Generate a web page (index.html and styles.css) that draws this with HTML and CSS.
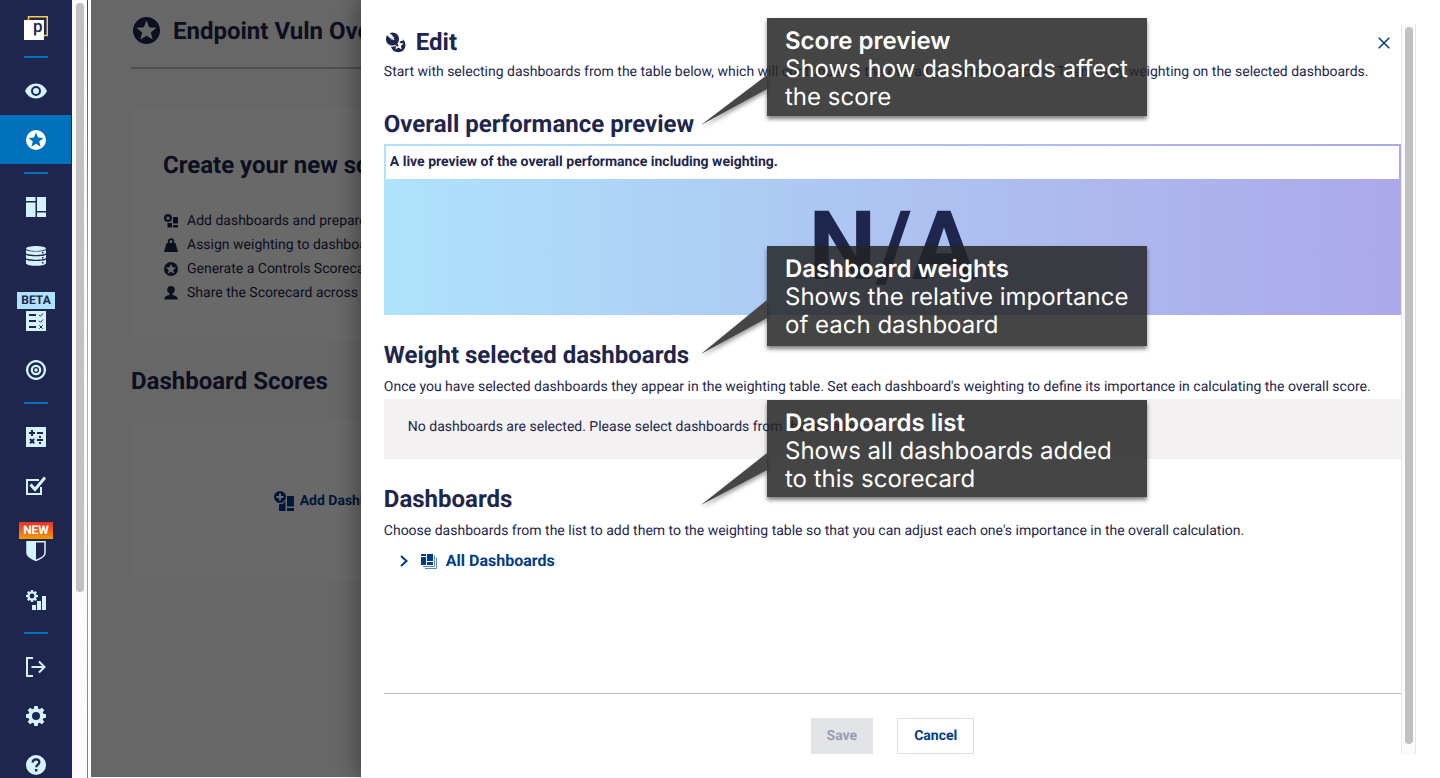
FILE: index.html
```html
<!DOCTYPE html>
<html lang="en">
<head>
<meta charset="utf-8">
<title>Edit scorecard</title>
<link rel="stylesheet" href="styles.css">
</head>
<body>
<svg class="defs" aria-hidden="true">
  <symbol id="star" viewBox="0 0 20 20"><path fill-rule="evenodd" d="M10 0a10 10 0 1 0 0 20a10 10 0 0 0 0-20zM10 2.500L12 7.600 17.400 8 13.200 11.400 14.600 16.700 10 13.800 5.400 16.700 6.800 11.400 2.600 8 8 7.600z"/></symbol>
  <symbol id="gear" viewBox="0 0 20 20"><path fill-rule="evenodd" d="M8.300 0h3.400l.5 2.700 1.400.6L15.900 1.700l2.400 2.400-1.600 2.300.6 1.400 2.700.5v3.400l-2.700.5-.6 1.400 1.600 2.300-2.400 2.400-2.300-1.600-1.400.6-.5 2.700H8.300l-.5-2.700-1.400-.6-2.300 1.600-2.400-2.400 1.600-2.300-.6-1.400L0 11.700V8.300l2.700-.5.6-1.400L1.700 4.100l2.400-2.400 2.300 1.600 1.400-.6zM10 6a4 4 0 1 0 0 8a4 4 0 0 0 0-8z"/></symbol>
</svg>

<nav class="sidebar" aria-label="Main">
  <a class="logo" href="#" aria-label="Home">
    <svg width="24" height="24" viewBox="0 0 24 24"><path d="M4.500 4V.75h18.750V19.500H20" fill="none" stroke="#f2cd47" stroke-width="1.500"/><path d="M0 4h20v20H0z" fill="#fff"/></svg>
    <span class="logo-letter">p</span>
  </a>
  <hr class="nav-rule">
  <a class="nav-item" href="#" aria-label="Overview"><svg width="22" height="16" viewBox="0 0 22 16"><path fill-rule="evenodd" d="M11 .5C6 .5 2 3.500 0 8c2 4.500 6 7.500 11 7.500S20 12.500 22 8C20 3.500 16 .5 11 .5zM11 3a5 5 0 1 1 0 10a5 5 0 0 1 0-10zM11 5a3 3 0 1 0 0 6a3 3 0 0 0 0-6z"/></svg></a>
  <a class="nav-item current" href="#" aria-label="Scorecards"><svg width="20" height="20"><use href="#star"/></svg></a>
  <hr class="nav-rule">
  <a class="nav-item" href="#" aria-label="Dashboards"><svg width="20" height="20" viewBox="0 0 20 20"><path d="M0 0h9.500v4H0zM0 5.500h9.500V20H0zM11 0h9v14h-9zM11 15.500h9V20h-9z"/></svg></a>
  <a class="nav-item" href="#" aria-label="Data"><svg width="20" height="20" viewBox="0 0 20 20"><ellipse cx="10" cy="2.500" rx="10" ry="2.500"/><path d="M0 4c2 2 18 2 20 0v3.300c-2 2.300-18 2.300-20 0zM0 8.700c2 2 18 2 20 0V12c-2 2.300-18 2.300-20 0zM0 13.400c2 2 18 2 20 0v4c-2 3.200-18 3.200-20 0z"/><path class="cut" d="M16 6h1.500v1.500H16zM16 11h1.500v1.500H16zM16 16h1.500v1.500H16z"/></svg></a>
  <a class="nav-item badged" href="#" aria-label="Beta: Checklist"><span class="badge beta">BETA</span><svg width="20" height="20" viewBox="0 0 20 20"><path d="M0 0h20v20H0z"/><path class="cut" d="M3 3h7v2H3zM3 9h7v2H3zM3 15h7v2H3z"/><path class="cut-line" d="M13 3.800l1.500 1.500L17 2.500M13 9.800l1.500 1.500L17 8.500M13.300 14.300l3.400 3.400M16.700 14.300l-3.400 3.400"/></svg></a>
  <a class="nav-item" href="#" aria-label="Targets"><svg width="20" height="20" viewBox="0 0 20 20"><circle cx="10" cy="10" r="8.900" class="line wide"/><circle cx="10" cy="10" r="4.200" class="line wide"/><circle cx="10" cy="10" r="1.800"/></svg></a>
  <hr class="nav-rule">
  <a class="nav-item" href="#" aria-label="Metrics"><svg width="20" height="20" viewBox="0 0 20 20"><path d="M0 0h20v20H0z"/><path class="cut" d="M5 3h2v2h2v2H7v2H5V7H3V5h2zM11 5h6v2h-6zM11 12h6v2h-6zM13 9h2v2h-2zM13 15h2v2h-2z"/><path d="M4 12l4.200 4.200M8.200 12L4 16.200" fill="none" stroke="#1e264d" stroke-width="2"/></svg></a>
  <a class="nav-item" href="#" aria-label="Tasks"><svg width="22" height="20" viewBox="0 0 22 20"><path class="line" d="M14 4H2v14h14v-7"/><path d="M5.500 8.500l4.500 5L20 1.500" fill="none" stroke="#d5f3ff" stroke-width="3"/></svg></a>
  <a class="nav-item badged" href="#" aria-label="New: Security"><span class="badge new">NEW</span><svg width="20" height="20" viewBox="0 0 20 20"><path class="line thin" d="M1 .8h18V12c0 3-4 5.500-9 7.500C5 17.500 1 15 1 12z"/><path d="M1 1h9v18.500C5 17.500 1 15 1 12z"/></svg></a>
  <a class="nav-item" href="#" aria-label="Reports"><svg width="20" height="20" viewBox="0 0 20 20"><use href="#gear" width="12" height="12"/><path d="M6 15h4v5H6zM11 11h4v9h-4zM16 6h4v14h-4z"/></svg></a>
  <hr class="nav-rule">
  <a class="nav-item" href="#" aria-label="Sign out"><svg width="20" height="20" viewBox="0 0 20 20"><path class="line" d="M7 1H1v18h6M5.500 10H19M13 4.500l5.500 5.500-5.500 5.500"/></svg></a>
  <a class="nav-item" href="#" aria-label="Settings"><svg width="20" height="20"><use href="#gear"/></svg></a>
  <a class="nav-item" href="#" aria-label="Help"><svg width="20" height="20" viewBox="0 0 20 20"><circle cx="10" cy="10" r="10"/><path d="M6.700 7.500c0-4.200 6.800-4.200 6.600-.3c0 2.400-3.100 2.300-3.100 5" fill="none" stroke="#1e264d" stroke-width="2.300"/><path class="cut" d="M9 14h2.400v2.400H9z"/></svg></a>
</nav>
<div class="track nav-track"><div class="thumb nav-thumb"></div></div>

<div class="workspace">
  <main class="page">
    <header class="page-head"><svg width="27" height="27"><use href="#star"/></svg><h1>Endpoint Vuln Overview</h1></header>
    <section class="card intro">
      <h2>Create your new scorecard</h2>
      <ul>
        <li><svg width="14" height="14" viewBox="0 0 14 14"><path fill-rule="evenodd" d="M4 0a4 4 0 1 0 0 8a4 4 0 0 0 0-8zM4 1.800l.7 1.500 1.600.2-1.200 1.100.3 1.600L4 5.400l-1.400.8.3-1.600-1.200-1.100 1.600-.2zM9 3h5v6.500H9zM9 11h5v2.500H9zM3.500 9H8v4.500H3.500z"/></svg>Add dashboards and prepare them</li>
        <li><svg width="14" height="14" viewBox="0 0 14 14"><path d="M2.500 5h9L14 14H0z"/><circle cx="7" cy="3.500" r="2.400" fill="none" stroke="#1e264d" stroke-width="1.700"/></svg>Assign weighting to dashboards</li>
        <li><svg width="14" height="14"><use href="#star"/></svg>Generate a Controls Scorecard</li>
        <li><svg width="14" height="14" viewBox="0 0 14 14"><circle cx="7" cy="3.800" r="3.800"/><path d="M5.500 7h3v2c3 .5 5 1.500 5.300 4.500H.2C.5 10.500 2.500 9.500 5.500 9z"/></svg>Share the Scorecard across teams</li>
      </ul>
    </section>
    <h2>Dashboard Scores</h2>
    <div class="scores">
      <div class="card score-card">
        <button class="add" type="button"><svg width="20" height="20" viewBox="0 0 20 20"><path fill-rule="evenodd" d="M6 0a6 6 0 1 0 0 12a6 6 0 0 0 0-12zM5 2.500h2V5h2.500v2H7v2.500H5V7H2.500V5H5zM13 5h7v10.500h-7zM13 17h7v3h-7zM5 13.300c3 .3 5-1 6.500-3V20H5z"/></svg>Add Dashboards</button>
      </div>
    </div>
  </main>
  <div class="overlay"></div>

  <section class="drawer" role="dialog" aria-labelledby="edit-title">
    <div class="drawer-body">
      <header class="drawer-head">
        <svg width="22" height="22" viewBox="0 0 22 22"><circle cx="14.200" cy="14" r="7.300"/><path fill="#fff" d="M14.500 8.800l1.500 3.300 3.600.4-2.700 2.400.8 3.500-3.200-1.800-3.100 1.800.8-3.500-2.700-2.400 3.600-.4z"/><path fill="#fff" d="M15 5.500l3.500.5.500 3.500-3 1z"/><circle cx="8.500" cy="8" r="7.800" fill="#fff"/><circle cx="8.500" cy="8" r="6.600"/><path d="M2.500 1.500L8 6.500" fill="none" stroke="#fff" stroke-width="3.500"/><path d="M7.500 8.500l2.200-2.500M7 6l3.200 2.800" fill="none" stroke="#fff" stroke-width="1.200"/><path d="M11 12l3 3" fill="none" stroke="#1e264d" stroke-width="2"/></svg>
        <h2 id="edit-title">Edit</h2>
        <button class="close" type="button" aria-label="Close"><svg width="12" height="12" viewBox="0 0 12 12"><path d="M.7.7l10.600 10.600M11.300.7L.7 11.300"/></svg></button>
      </header>
      <p>Start with selecting dashboards from the table below, which will contribute to the overall performance score. Then apply weighting on the selected dashboards.</p>

      <section class="block">
        <h2>Overall performance preview</h2>
        <div class="preview">
          <p class="preview-note">A live preview of the overall performance including weighting.</p>
          <div class="preview-score">N/A</div>
        </div>
      </section>

      <section class="block">
        <h2>Weight selected dashboards</h2>
        <p>Once you have selected dashboards they appear in the weighting table. Set each dashboard's weighting to define its importance in calculating the overall score.</p>
        <div class="empty">No dashboards are selected. Please select dashboards from the table below.</div>
      </section>

      <section class="block">
        <h2>Dashboards</h2>
        <p>Choose dashboards from the list to add them to the weighting table so that you can adjust each one's importance in the overall calculation.</p>
        <button class="tree" type="button">
          <svg class="chevron" width="8" height="12" viewBox="0 0 8 12"><path d="M1 1l5.500 5L1 11" fill="none" stroke="#003c88" stroke-width="2"/></svg>
          <svg width="16" height="16" viewBox="0 0 16 16"><path d="M0 1h5v2H0zM0 4h5v8H0zM6 1h6v7H6zM6 9h6v3H6z"/><path d="M2 13.500h11.500V2.500M4 15.500h11.500V4.500" fill="none" stroke="#5d86bb"/></svg>
          All Dashboards
        </button>
      </section>

      <footer class="actions">
        <button class="btn" type="button" disabled>Save</button>
        <button class="btn secondary" type="button">Cancel</button>
      </footer>
    </div>
    <div class="track drawer-track"><div class="thumb drawer-thumb"></div></div>
  </section>
</div>

<aside class="callout callout-preview">
  <svg class="tail" width="66" height="50" viewBox="0 0 66 50"><path d="M66 0v14L0 50z"/></svg>
  <strong>Score preview</strong><span>Shows how dashboards affect<br>the score</span>
</aside>
<aside class="callout callout-weights">
  <svg class="tail" width="66" height="54" viewBox="0 0 66 54"><path d="M66 0v18L0 54z"/></svg>
  <strong>Dashboard weights</strong><span>Shows the relative importance<br>of each dashboard</span>
</aside>
<aside class="callout callout-list">
  <svg class="tail" width="66" height="52" viewBox="0 0 66 52"><path d="M66 0v17L0 52z"/></svg>
  <strong>Dashboards list</strong><span>Shows all dashboards added<br>to this scorecard</span>
</aside>
</body>
</html>
```

FILE: styles.css
```css
* { box-sizing: border-box; }

body {
  display: flex;
  height: 100vh;
  margin: 0;
  overflow: hidden;
  background: #fff;
  color: #1e264d;
  fill: #1e264d;
  font: 14px/24px Roboto, "Liberation Sans", sans-serif;
  text-rendering: geometricPrecision;
}

h1, h2, p, ul { margin: 0; }
h1, h2 { font-size: 24px; line-height: 32px; font-weight: 700; }
button { font: inherit; font-weight: 700; text-rendering: inherit; color: #003c88; fill: #003c88; background: none; border: 0; padding: 0; }
svg { flex: none; }
.defs { position: absolute; width: 0; height: 0; }

/* Sidebar */
.sidebar {
  flex: none;
  width: 72px;
  overflow: hidden;
  background: #1e264d;
  fill: #d5f3ff;
}
.logo {
  position: relative;
  display: flex;
  justify-content: center;
  height: 48px;
  padding-top: 16px;
  text-decoration: none;
}
.logo-letter {
  position: absolute;
  top: 17px;
  left: 33px;
  color: #1e264d;
  font: 500 17px/20px Roboto, sans-serif;
}
.nav-rule { width: 24px; height: 2px; margin: 8px auto; border: 0; background: #0071bc; }
.nav-item { display: flex; align-items: center; justify-content: center; height: 49px; text-decoration: none; }
.nav-item.current { margin-right: 1px; padding-left: 1px; background: #0071bc; fill: #fff; }
.nav-item.badged { flex-direction: column; justify-content: flex-start; gap: 2px; height: 65px; padding-top: 12px; }
.badge { padding: 0 4px; font-size: 12px; line-height: 17px; font-weight: 700; }
.beta { background: #aee3fb; color: #1e264d; }
.new { background: linear-gradient(#e8302a, #f49b00); color: #fff; }
.cut { fill: #1e264d; }
.cut-line { fill: none; stroke: #1e264d; stroke-width: 1; }
.line { fill: none; stroke: #d5f3ff; stroke-width: 2; }
.line.thin { stroke-width: 1.5; }
.line.wide { stroke-width: 2.3; }

/* Scrollbars */
.track { flex: none; background: #fafafa; }
.thumb { width: 8px; border-radius: 4px; background: #c1c1c1; }
.nav-track {
  width: 16px;
  margin-right: 3px;
  padding: 3px 3px 0 4px;
  background: linear-gradient(#e00000, #f09030 35%, #e0b030 60%, #50a030) right / 1px 100% no-repeat #fafafa;
}
.nav-thumb { height: 76%; }
.drawer-track { width: 15px; margin-right: 24px; padding: 3px; border: solid #e8e8e8; border-width: 0 1px; }
.drawer-thumb { height: 99%; }

/* Page behind the drawer */
.workspace { position: relative; flex: 1; min-width: 0; overflow: hidden; }
.page { height: calc(100% - 1px); padding: 14px 40px; background: #faf9f9; }
.page-head { display: flex; align-items: center; gap: 13px; height: 55px; padding: 0 2px 20px; border-bottom: 2px solid #bdbdbd; }
.page > h2 { margin: 24px 0; }
.card { background: #fff; }
.intro { margin-top: 39px; padding: 41px 32px 36px; }
.intro ul { margin-top: 28px; padding: 0; list-style: none; }
.intro li { display: flex; align-items: center; gap: 9px; padding-left: 1px; }
.scores { display: grid; grid-template-columns: repeat(3, 1fr); gap: 12px; }
.score-card { display: flex; align-items: center; justify-content: center; height: 160px; }
.add { display: flex; align-items: center; gap: 6px; }
.overlay { position: absolute; inset: 0 0 1px; background: rgba(0, 0, 0, 0.59); }

/* Drawer */
.drawer {
  position: absolute;
  inset: 0 0 0 auto;
  display: flex;
  width: 80%;
  padding: 24px 0 24px 23px;
  background: #fff;
  box-shadow: -4px 0 20px rgba(0, 0, 0, 0.35);
}
.drawer-body { display: flex; flex: 1; flex-direction: column; min-width: 0; white-space: nowrap; }
.drawer-head { display: flex; align-items: center; gap: 10px; height: 36px; }
.close { display: flex; margin: 2px 11px 0 auto; }
.close path { stroke: #003c88; stroke-width: 1.5; }
.block { margin-top: 24px; }
.block > h2 { margin-bottom: 4px; }
.preview { background: linear-gradient(90deg, #aee3fb, #adc6f2 45%, #aca8e9); }
.preview-note {
  height: 35px;
  padding: 4px;
  border: 2px solid transparent;
  border-bottom: 0;
  background: linear-gradient(#fff, #fff) padding-box;
  font-weight: 700;
}
.preview-score { padding: 12px 0; text-align: center; font-size: 96px; line-height: 112px; font-weight: 700; }
.empty { padding: 16px 24px 20px; background: #f3f1f1; }
.tree { display: flex; align-items: center; gap: 9px; margin: 6px 0 0 16px; font-size: 16px; }
.tree .chevron { margin-right: 4px; }
.actions { display: flex; justify-content: center; gap: 24px; margin-top: auto; padding-top: 24px; border-top: 1px solid #bdbdbd; }
.btn { height: 36px; padding: 0 16px; }
.btn:disabled { background: #e3e4e8; color: #9a9eb3; }
.btn.secondary { border: 1px solid #dddfe5; }

/* Callouts */
.callout {
  position: absolute;
  left: 767px;
  width: 380px;
  padding: 9px 18px;
  background: rgba(37, 37, 37, 0.85);
  box-shadow: 0 3px 4px rgba(0, 0, 0, 0.5);
  color: #fff;
  font: 24px/28px Inter, sans-serif;
  white-space: nowrap;
}
.callout strong, .callout span { display: block; }
.callout strong { font-weight: 600; }
.tail { position: absolute; right: 100%; fill: #464646; filter: drop-shadow(0 3px 2px rgba(0, 0, 0, 0.4)); }
.callout-preview { top: 18px; height: 98px; }
.callout-preview .tail { top: 57px; }
.callout-weights { top: 246px; height: 100px; }
.callout-weights .tail { top: 54px; }
.callout-list { top: 400px; height: 97px; }
.callout-list .tail { top: 53px; }
```
